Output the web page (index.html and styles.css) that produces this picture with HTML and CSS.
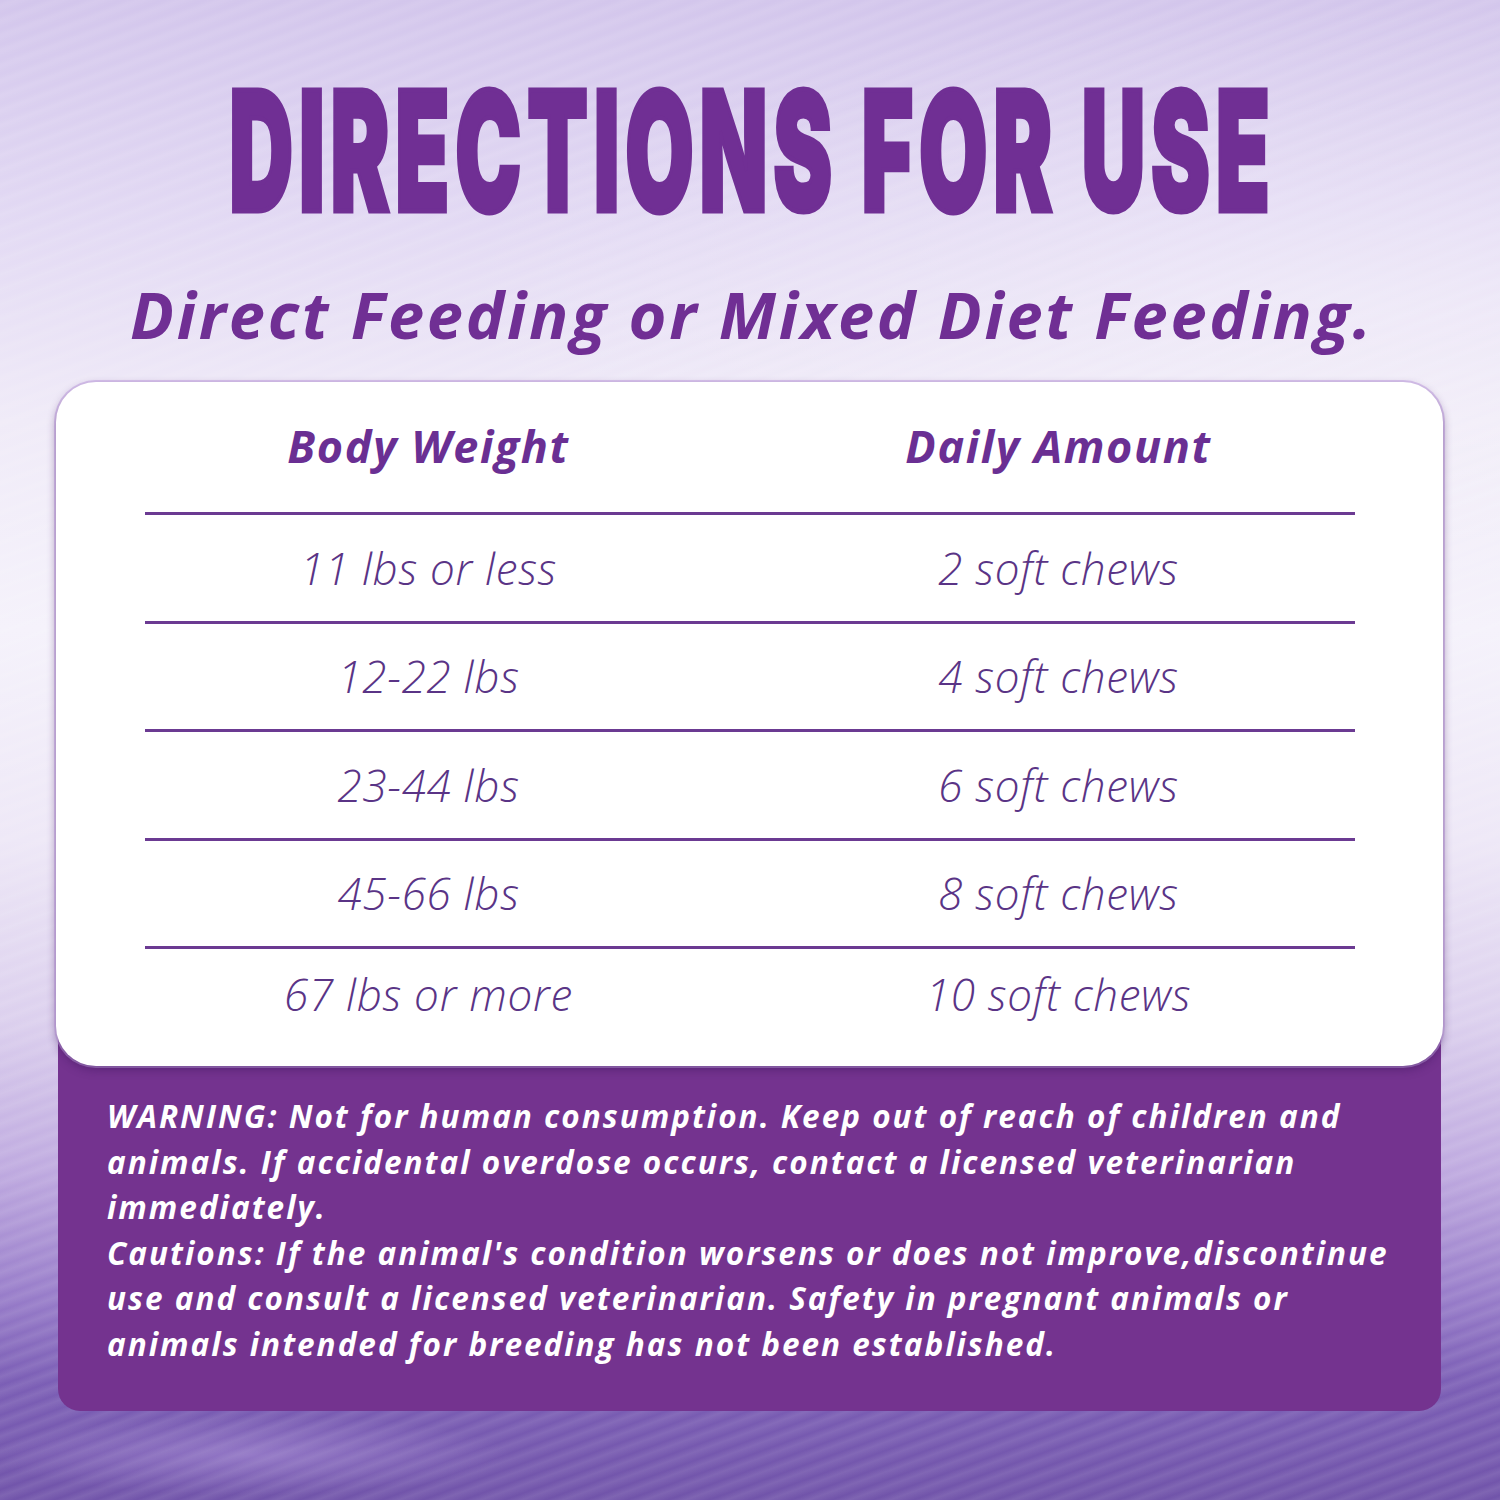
FILE: index.html
```html
<!DOCTYPE html>
<html>
<head>
<meta charset="utf-8">
<link rel="stylesheet" href="styles.css">
</head>
<body>
<div class="page">
  <div class="streaks"></div>
  <h1 class="title"><span>DIRECTIONS FOR USE</span></h1>
  <p class="subtitle">Direct Feeding or Mixed Diet Feeding.</p>
  <div class="box">
    <div class="card">
      <div class="row head">
        <div class="cell left">Body Weight</div>
        <div class="cell right">Daily Amount</div>
      </div>
      <div class="row">
        <div class="cell left">11 lbs or less</div>
        <div class="cell right">2 soft chews</div>
      </div>
      <div class="row">
        <div class="cell left">12-22 lbs</div>
        <div class="cell right">4 soft chews</div>
      </div>
      <div class="row">
        <div class="cell left">23-44 lbs</div>
        <div class="cell right">6 soft chews</div>
      </div>
      <div class="row">
        <div class="cell left">45-66 lbs</div>
        <div class="cell right">8 soft chews</div>
      </div>
      <div class="row last">
        <div class="cell left">67 lbs or more</div>
        <div class="cell right">10 soft chews</div>
      </div>
    </div>
    <div class="warning">
      <p>WARNING: Not for human consumption. Keep out of reach of children and animals. If accidental overdose occurs, contact a licensed veterinarian immediately.</p>
      <p>Cautions: If the animal's condition worsens or does not improve,discontinue use and consult a licensed veterinarian. Safety in pregnant animals or animals intended for breeding has not been established.</p>
    </div>
  </div>
</div>
</body>
</html>
```

FILE: styles.css
```css
html, body {
  margin: 0;
  padding: 0;
}
body {
  width: 1500px;
  height: 1500px;
  overflow: hidden;
}
.page {
  position: relative;
  width: 1500px;
  height: 1500px;
  overflow: hidden;
  background:
    linear-gradient(180deg, #d3c6ec 0%, #e3daf4 15%, #f0ebf8 28%, #f5f2fb 42%, #eee8f7 56%, #dcd0ee 68%, #bfaae0 78%, #9a7fcb 86%, #7c5fb6 92%, #7154aa 100%);
  font-family: "Open Sans", "Noto Sans", sans-serif;
}
.streaks {
  position: absolute;
  inset: 0;
  background:
    repeating-linear-gradient(160deg, rgba(255,255,255,0) 0px, rgba(255,255,255,0.16) 6px, rgba(255,255,255,0) 14px),
    radial-gradient(ellipse 900px 300px at 1350px 300px, rgba(255,255,255,0.5), rgba(255,255,255,0)),
    radial-gradient(ellipse 260px 40px at 250px 1455px, rgba(200,175,240,0.6), rgba(255,255,255,0));
  opacity: 0.6;
}
.title {
  position: relative;
  display: flex;
  justify-content: center;
  margin: 0;
  padding-top: 68px;
  height: 170px;
  font-family: "Inter", "Roboto", sans-serif;
  font-weight: 900;
  font-size: 166px;
  line-height: 166px;
  color: #702f94;
}
.title span {
  flex: none;
  display: block;
  transform: scaleX(0.532);
  transform-origin: 50% 50%;
  white-space: nowrap;
  letter-spacing: 11px;
  -webkit-text-stroke: 5px #702f94;
  margin-left: 6px;
}
.subtitle {
  position: relative;
  margin: 36px 0 0 0;
  padding-left: 130px;
  font-family: "Open Sans", sans-serif;
  font-style: italic;
  font-weight: 700;
  font-size: 65px;
  line-height: 80px;
  letter-spacing: 2.7px;
  color: #702f94;
  white-space: nowrap;
}
.box {
  position: relative;
  margin: 28px 0 0 56px;
  width: 1387px;
}
.card {
  position: relative;
  z-index: 2;
  background: #ffffff;
  border-radius: 40px;
  box-shadow: 0 4px 10px rgba(60, 20, 90, 0.45), 0 0 0 2px rgba(200, 170, 230, 0.6);
  padding: 14px 88px 0 89px;
  height: 684px;
  box-sizing: border-box;
}
.row {
  display: grid;
  grid-template-columns: 1fr 1fr;
  border-bottom: 3px solid #6b3a92;
  height: 105.5px;
  align-items: center;
  box-sizing: content-box;
}
.row.head {
  height: 116px;
}
.row.last {
  border-bottom: none;
  height: 90px;
}
.cell {
  text-align: center;
  font-family: "Open Sans", sans-serif;
  font-style: italic;
  font-weight: 300;
  font-size: 44px;
  letter-spacing: 0.7px;
  color: #5a3486;
  white-space: nowrap;
}
.cell.left {
  padding-right: 38px;
}
.cell.right {
  padding-left: 12px;
}
.row.head .cell {
  font-weight: 700;
  font-size: 45px;
  letter-spacing: 1.6px;
  color: #6a2f93;
  padding-bottom: 18px;
}
.warning {
  position: relative;
  z-index: 1;
  margin: -28px 2px 0 2px;
  background: #74338f;
  border-radius: 0 0 22px 22px;
  padding: 55px 48px 45px 49px;
  color: #ffffff;
  font-family: "Open Sans", sans-serif;
  font-style: italic;
  font-weight: 700;
  font-size: 31.5px;
  letter-spacing: 2px;
  line-height: 45.5px;
}
.warning p {
  margin: 0;
}
```
